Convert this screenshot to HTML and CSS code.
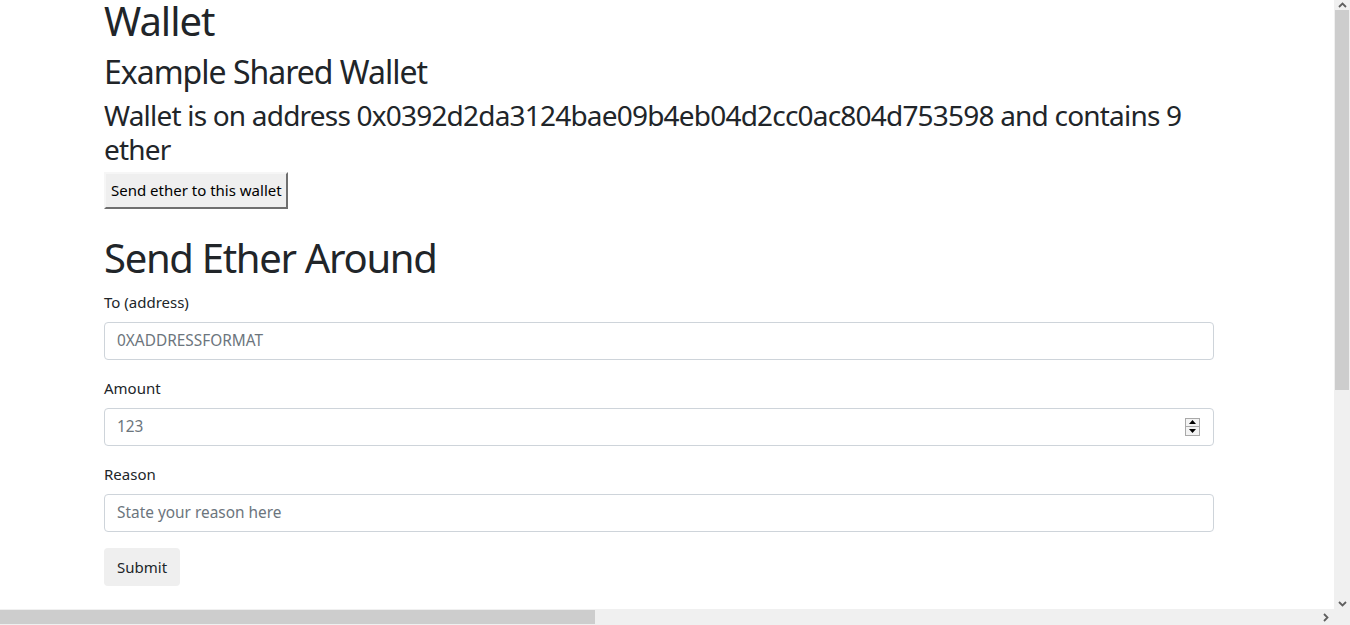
FILE: index.html
```html
<!DOCTYPE html>
<html lang="en">
<head>
<meta charset="utf-8">
<title>Wallet</title>
<link rel="stylesheet" href="styles.css">
</head>
<body>
<div class="page">
  <main class="container">
    <h1 class="h1 page-title">Wallet</h1>
    <h2 class="h2">Example Shared Wallet</h2>
    <h3 class="h3">Wallet is on address 0x0392d2da3124bae09b4eb04d2cc0ac804d753598 and contains 9 ether</h3>
    <button class="btn-send" type="button">Send ether to this wallet</button>

    <h1 class="h1 section-title">Send Ether Around</h1>
    <form class="form">
      <div class="form-group">
        <label class="label" for="to">To (address)</label>
        <input class="input" id="to" type="text" placeholder="0XADDRESSFORMAT">
      </div>
      <div class="form-group">
        <label class="label" for="amount">Amount</label>
        <div class="number-wrap">
          <input class="input" id="amount" type="text" placeholder="123">
          <span class="spinner" aria-hidden="true">
            <span class="spin-btn"><svg width="7" height="4" viewBox="0 0 7 4"><path d="M3.5 0 L7 4 L0 4 Z" fill="#000"/></svg></span>
            <span class="spin-btn"><svg width="7" height="4" viewBox="0 0 7 4"><path d="M0 0 L7 0 L3.5 4 Z" fill="#000"/></svg></span>
          </span>
        </div>
      </div>
      <div class="form-group">
        <label class="label" for="reason">Reason</label>
        <input class="input" id="reason" type="text" placeholder="State your reason here">
      </div>
      <button class="btn-submit" type="button">Submit</button>
    </form>
  </main>
</div>

<div class="vscroll" aria-hidden="true">
  <span class="arrow arrow-up"><svg width="9" height="6" viewBox="0 0 9 6"><path d="M1 5 L4.5 1.5 L8 5" fill="none" stroke="#5f5f5f" stroke-width="1.8"/></svg></span>
  <span class="vthumb"></span>
  <span class="vtrack"></span>
  <span class="arrow arrow-down"><svg width="9" height="6" viewBox="0 0 9 6"><path d="M1 1 L4.5 4.5 L8 1" fill="none" stroke="#5f5f5f" stroke-width="1.8"/></svg></span>
</div>
<div class="hscroll" aria-hidden="true">
  <span class="hthumb"></span>
  <span class="htrack"></span>
  <span class="arrow arrow-right"><svg width="6" height="9" viewBox="0 0 6 9"><path d="M1 1 L4.5 4.5 L1 8" fill="none" stroke="#5f5f5f" stroke-width="1.8"/></svg></span>
  <span class="corner"></span>
</div>
</body>
</html>
```

FILE: styles.css
```css
* { box-sizing: border-box; }

html, body {
  margin: 0;
  padding: 0;
  height: 100%;
  overflow: hidden;
  background: #fff;
}

body {
  font-family: "Noto Sans", "Open Sans", sans-serif;
  font-size: 16px;
  line-height: 1.5;
  color: #212529;
}

.page {
  width: 1334px;
  height: 609px;
  overflow: hidden;
}

.container {
  width: 1110px;
  margin-left: 104px;
}

.h1, .h2, .h3 {
  margin: 0 0 8px;
  font-weight: 400;
  line-height: 1.2;
  color: #212529;
}

.h1 { font-size: 40px; letter-spacing: -1px; }
.h2 { font-size: 32px; letter-spacing: -1px; }
.h3 { font-size: 28px; letter-spacing: -0.8px; margin-bottom: 5px; }

.page-title {
  line-height: 42px;
  margin-bottom: 11px;
}

.btn-send {
  display: block;
  font-family: inherit;
  font-size: 15px;
  line-height: 20px;
  color: #000;
  background: #efefef;
  padding: 6px 4px 7px 5px;
  border: 2px solid;
  border-color: #f6f6f6 #6f6f6f #6f6f6f #f6f6f6;
  border-radius: 0;
  height: 37px;
}

.section-title {
  margin-top: 25px;
  margin-bottom: 8px;
  letter-spacing: -1.3px;
}

.form { display: flex; flex-direction: column; align-items: flex-start; }

.form-group {
  display: flex;
  flex-direction: column;
  width: 100%;
  margin-bottom: 16px;
}

.label {
  display: block;
  margin-bottom: 8px;
  font-size: 15px;
  line-height: 24px;
  color: #212529;
}

.input {
  display: block;
  width: 100%;
  height: 38px;
  padding: 6px 12px;
  font-family: inherit;
  font-size: 15.4px;
  line-height: 24px;
  color: #495057;
  background: #fff;
  border: 1px solid #ced4da;
  border-radius: 4px;
  outline: none;
}

.input::placeholder { color: #6c757d; opacity: 1; }

.number-wrap { position: relative; }

.spinner {
  position: absolute;
  right: 14px;
  top: 10px;
  width: 15px;
  height: 18px;
  display: flex;
  flex-direction: column;
  border: 1px solid #a9a9a9;
  background: #e9e9e9;
}

.spin-btn {
  flex: 1;
  display: flex;
  align-items: center;
  justify-content: center;
  background: #f3f3f3;
}

.spin-btn + .spin-btn { border-top: 1px solid #a9a9a9; }

.btn-submit {
  font-family: inherit;
  font-size: 15px;
  line-height: 24px;
  height: 38px;
  padding: 6px 13px;
  color: #212529;
  background: #efefef;
  border: 0;
  border-radius: 4px;
}

/* imitation browser scrollbars */
.vscroll {
  position: fixed;
  top: 0;
  right: 0;
  width: 16px;
  height: 609px;
  background: #f0f0f0;
  display: flex;
  flex-direction: column;
  align-items: center;
}

.vscroll .arrow { height: 10px; display: flex; align-items: center; justify-content: center; width: 16px; }
.vthumb { width: 14px; height: 380px; background: #cdcdcd; }
.vtrack { flex: 1; }

.hscroll {
  position: fixed;
  left: 0;
  bottom: 0;
  width: 1350px;
  height: 16px;
  background: #f0f0f0;
  display: flex;
  align-items: center;
}

.hthumb { width: 595px; height: 14px; background: #cdcdcd; }
.htrack { flex: 1; }
.arrow-right { width: 16px; height: 16px; display: flex; align-items: center; justify-content: center; }
.corner { width: 16px; height: 16px; }
```
